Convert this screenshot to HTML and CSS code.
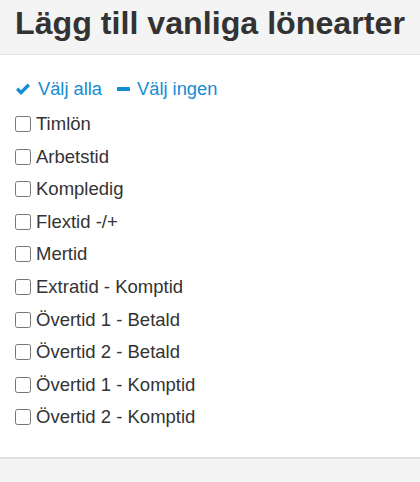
FILE: index.html
```html
<!DOCTYPE html>
<html lang="sv">
<head>
<meta charset="utf-8">
<link rel="stylesheet" href="styles.css">
</head>
<body>
<div class="modal">
  <div class="header"><h1 class="title">Lägg till vanliga lönearter</h1></div>
  <div class="content">
    <div class="actions">
      <a class="link" href="#"><svg class="icon-check" viewBox="0 0 16 13" width="16" height="13"><path d="M1 7 L3.4 4.6 L6 7.2 L12.6 0.6 L15 3 L6 12 Z" fill="#158cd3"/></svg>Välj alla</a>
      <a class="link" href="#"><span class="icon-minus"></span>Välj ingen</a>
    </div>
    <ul class="list">
      <li class="row"><input type="checkbox" class="cb"><span>Timlön</span></li>
      <li class="row"><input type="checkbox" class="cb"><span>Arbetstid</span></li>
      <li class="row"><input type="checkbox" class="cb"><span>Kompledig</span></li>
      <li class="row"><input type="checkbox" class="cb"><span>Flextid -/+</span></li>
      <li class="row"><input type="checkbox" class="cb"><span>Mertid</span></li>
      <li class="row"><input type="checkbox" class="cb"><span>Extratid - Komptid</span></li>
      <li class="row"><input type="checkbox" class="cb"><span>Övertid 1 - Betald</span></li>
      <li class="row"><input type="checkbox" class="cb"><span>Övertid 2 - Betald</span></li>
      <li class="row"><input type="checkbox" class="cb"><span>Övertid 1 - Komptid</span></li>
      <li class="row"><input type="checkbox" class="cb"><span>Övertid 2 - Komptid</span></li>
    </ul>
  </div>
  <div class="footer"></div>
</div>
</body>
</html>
```
FILE: styles.css
```css
html, body { margin: 0; padding: 0; background: #fff; }
body { font-family: "Liberation Sans", Arial, sans-serif; color: #333; }
.modal { display: flex; flex-direction: column; height: 482px; }
.header {
  background: #f4f4f4;
  border-bottom: 1px solid #e5e5e5;
  height: 55px;
  box-sizing: border-box;
  padding: 0 15px;
}
.title {
  margin: 0;
  font-size: 32.2px;
  font-weight: bold;
  line-height: 46px;
  color: #333;
  white-space: nowrap;
}
.content { flex: 1; padding: 22px 15px 0; }
.actions { display: flex; gap: 15px; height: 24px; align-items: center; margin-bottom: 7px; }
.link {
  color: #158cd3;
  text-decoration: none;
  font-size: 18.3px;
  display: flex;
  align-items: center;
  gap: 7px;
}
.icon-check { display: block; }
.icon-minus { display: block; width: 13px; height: 4px; background: #158cd3; border-radius: 0.5px; }
.list { list-style: none; margin: 0; padding: 0; }
.row {
  display: flex;
  align-items: center;
  height: 32.56px;
  font-size: 18.5px;
  color: #333;
}
.cb {
  margin: 0 5px 0 0;
  width: 16px;
  height: 16px;
}
.footer {
  height: 25px;
  background: #f4f4f4;
  border-top: 2px solid #e0e0e0;
  box-sizing: border-box;
}
```
